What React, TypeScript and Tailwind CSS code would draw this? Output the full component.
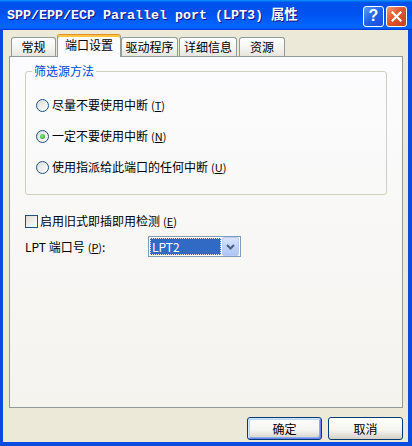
import React from "react";

const ui = "font-['Noto_Sans_CJK_SC','Noto_Sans',sans-serif]";

type Tab = { label: string; w: string; ml: string; active?: boolean };

const tabs: Tab[] = [
  { label: "常规", w: "w-[45px]", ml: "ml-0" },
  { label: "端口设置", w: "w-[64px]", ml: "ml-[1px]", active: true },
  { label: "驱动程序", w: "w-[57px]", ml: "ml-0" },
  { label: "详细信息", w: "w-[58px]", ml: "ml-[1px]" },
  { label: "资源", w: "w-[46px]", ml: "ml-[2px]" },
];

const Key = ({ k }: { k: string }) => (
  <span className="ml-[3px] text-[11px]">
    (<span className="underline">{k}</span>)
  </span>
);

const Radio = ({ checked, label, k }: { checked?: boolean; label: string; k: string }) => (
  <div className="flex h-[16px] items-center gap-[3px]">
    <span className="flex h-[13px] w-[13px] items-center justify-center rounded-full border border-[#1C5180] bg-[linear-gradient(135deg,#DCDCD7,#FFFFFF)]">
      {checked && (
        <span className="h-[5px] w-[5px] rounded-full bg-[radial-gradient(circle_at_40%_40%,#8BE888,#17A117)]" />
      )}
    </span>
    <span>
      {label}
      <Key k={k} />
    </span>
  </div>
);

const XpButton = ({ label, isDefault }: { label: string; isDefault?: boolean }) => (
  <button
    className={
      "flex h-[23px] w-[75px] items-center justify-center rounded-[3px] border border-[#003C74] bg-[linear-gradient(180deg,#FFFFFF_0%,#F3F3EF_60%,#D6D0C5_100%)] text-[12px] text-black " +
      (isDefault ? "shadow-[inset_1px_1px_0_#CEE7FF,inset_-1px_-1px_0_#6982EE,inset_2px_2px_0_#BCD4F6,inset_-2px_-2px_0_#89ADE4]" : "")
    }
  >
    {label}
  </button>
);

export default function App() {
  return (
    <div className={"flex h-[446px] w-[412px] flex-col overflow-hidden text-[12px] text-black " + ui}>
      {/* title bar */}
      <div className="flex h-[30px] shrink-0 items-center bg-[linear-gradient(180deg,#0997FF,#0053EE_8%,#0050EE_40%,#0066FF_88%,#0066FF_93%,#005BFF_95%,#003DD7_96%,#003DD7)] pl-[7px] pr-[5px]">
        <span className="flex-1 pt-[1px] font-['Liberation_Mono','Noto_Sans_CJK_SC',monospace] text-[13.33px] font-bold text-white [text-shadow:1px_1px_#0F1089]">
          SPP/EPP/ECP Parallel port (LPT3) 属性
        </span>
        <div className="flex gap-[2px] pt-[2px]">
          <div className="flex h-[21px] w-[21px] items-center justify-center rounded-[3px] border border-white bg-[linear-gradient(135deg,#5C9BFF,#2260E8_50%,#1B4FD8)] font-['Liberation_Sans',sans-serif] text-[16px] font-bold leading-none text-white">
            ?
          </div>
          <div className="flex h-[21px] w-[21px] items-center justify-center rounded-[3px] border border-white bg-[linear-gradient(135deg,#F09A78,#E0562C_45%,#C8401A)]">
            <svg width="11" height="11" viewBox="0 0 11 11">
              <path d="M1.5 1.5 L9.5 9.5 M9.5 1.5 L1.5 9.5" stroke="white" strokeWidth="2.2" strokeLinecap="square" />
            </svg>
          </div>
        </div>
      </div>

      {/* body */}
      <div className="flex flex-1 flex-col border-b-[4px] border-l-[3px] border-r-[4px] border-[#0A4CE0] bg-[#ECE9D8] pl-[6px] pr-[5px] pt-[4px]">
        {/* tabs */}
        <div className="flex h-[22px] items-end pl-[2px]">
          {tabs.map((t) =>
            t.active ? (
              <div
                key={t.label}
                className={`relative z-10 -mb-px flex h-[23px] items-center justify-center rounded-t-[3px] border-x border-t border-x-[#919B9C] border-t-[#E68B2C] bg-[#FCFCFE] pb-[2px] shadow-[inset_0_2px_0_#FFC73C] ${t.w} ${t.ml}`}
              >
                {t.label}
              </div>
            ) : (
              <div
                key={t.label}
                className={`flex h-[19px] items-center justify-center rounded-t-[3px] border-x border-t border-[#919B9C] bg-[linear-gradient(180deg,#FFFFFF,#F3F3EF_60%,#E6E5DE)] ${t.w} ${t.ml}`}
              >
                {t.label}
              </div>
            )
          )}
        </div>

        {/* panel */}
        <div className="flex h-[352px] flex-col border border-[#919B9C] bg-[linear-gradient(180deg,#FCFCFE,#F4F3EE)] px-[15px] pt-[7px]">
          <fieldset className="rounded-[3px] border border-[#D0D0BF] pb-[19px] pl-[10px]">
            <legend className="ml-[-4px] px-[2px] leading-[14px] text-[#0046D5]">筛选源方法</legend>
            <div className="mt-[19px] flex flex-col gap-[15px]">
              <Radio label="尽量不要使用中断" k="T" />
              <Radio label="一定不要使用中断" k="N" checked />
              <Radio label="使用指派给此端口的任何中断" k="U" />
            </div>
          </fieldset>

          <div className="mt-[18px] flex h-[16px] items-center gap-[2px]">
            <span className="h-[13px] w-[13px] border border-[#1C5180] bg-[linear-gradient(135deg,#DCDCD7,#FFFFFF)]" />
            <span>
              启用旧式即插即用检测
              <Key k="E" />
            </span>
          </div>

          <div className="mt-[7px] flex h-[21px] items-center">
            <span className="w-[123px]">
              LPT 端口号
              <Key k="P" />:
            </span>
            <div className="flex h-[21px] w-[93px] items-center border border-[#7F9DB9] bg-white pl-[1px] pr-[1px]">
              <div className="flex h-[17px] flex-1 items-center bg-[#316AC5] pl-[2px] text-white outline-1 outline-dotted outline-[#E0E0E0] -outline-offset-1">
                LPT2
              </div>
              <div className="ml-[1px] flex h-[19px] w-[17px] items-center justify-center rounded-[2px] border border-[#B9CBF3] bg-[linear-gradient(180deg,#D8E4FC,#BCD0F8_60%,#AFC6F6)]">
                <svg width="9" height="6" viewBox="0 0 9 6">
                  <path d="M1 1 L4.5 4.5 L8 1" stroke="#4D6185" strokeWidth="2" fill="none" />
                </svg>
              </div>
            </div>
          </div>
        </div>

        {/* buttons */}
        <div className="flex justify-end gap-[6px] pt-[9px]">
          <XpButton label="确定" isDefault />
          <XpButton label="取消" />
        </div>
      </div>
    </div>
  );
}
